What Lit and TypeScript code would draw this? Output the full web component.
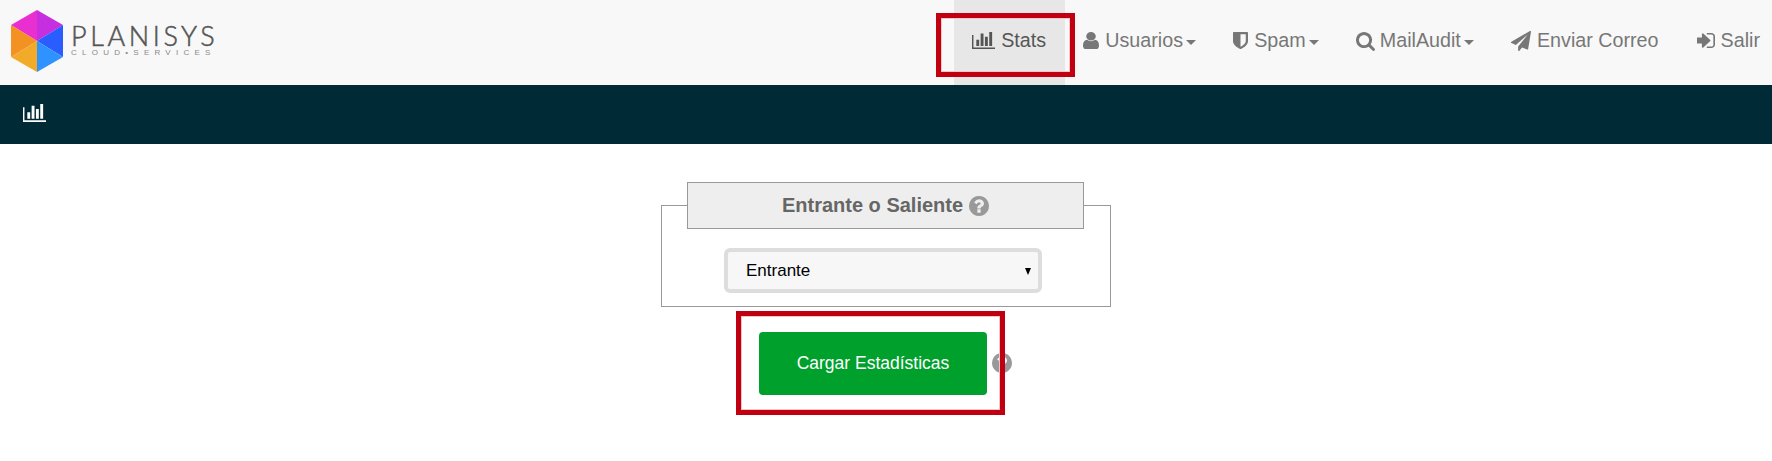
import { LitElement, html, css, svg } from "lit";
import { customElement } from "lit/decorators.js";

const P = {
  chart: "M640 896v512h-256v-512h256zm384-512v1024h-256v-1024h256zm1024 1152v128h-2048v-1152h128v1024h1920zm-640-896v768h-256v-768h256zm384-384v1152h-256v-1152h256z",
  user: "M1536 1399q0 109-62.5 187t-150.5 78h-854q-88 0-150.5-78t-62.5-187q0-85 8.5-160.5t31.5-152 58.5-131 94-89 134.5-34.5q131 128 313 128t313-128q76 0 134.5 34.5t94 89 58.5 131 31.5 152 8.5 160.5zm-256-887q0 159-112.5 271.5t-271.5 112.5-271.5-112.5-112.5-271.5 112.5-271.5 271.5-112.5 271.5 112.5 112.5 271.5z",
  shield: "M1344 960v-640h-448v1137q119-63 213-137 235-184 235-360zm192-768v768q0 86-33.5 170.5t-83 150-118 127.5-126.5 103-121 77.5-89.5 49.5-42.5 20q-12 6-26 6t-26-6q-16-7-42.5-20t-89.5-49.5-121-77.5-126.5-103-118-127.5-83-150-33.5-170.5v-768q0-26 19-45t45-19h1152q26 0 45 19t19 45z",
  search: "M1216 832q0-185-131.5-316.5t-316.5-131.5-316.5 131.5-131.5 316.5 131.5 316.5 316.5 131.5 316.5-131.5 131.5-316.5zm512 832q0 52-38 90t-90 38q-54 0-90-38l-343-342q-179 124-399 124-143 0-273.5-55.5t-225-150-150-225-55.5-273.5 55.5-273.5 150-225 225-150 273.5-55.5 273.5 55.5 225 150 150 225 55.5 273.5q0 220-124 399l343 343q37 37 37 90z",
  plane: "M1764 11q33 24 27 64l-256 1536q-5 29-32 45-14 8-31 8-11 0-24-5l-453-185-242 295q-18 23-49 23-13 0-22-4-19-7-30.5-23.5t-11.5-36.5v-349l864-1059-1069 925-395-162q-37-14-40-55-2-40 32-59l1664-960q15-9 32-9 20 0 36 11z",
  signin: "M1184 896q0 26-19 45l-544 544q-19 19-45 19t-45-19-19-45v-288h-448q-26 0-45-19t-19-45v-384q0-26 19-45t45-19h448v-288q0-26 19-45t45-19 45 19l544 544q19 19 19 45zm352-352v704q0 119-84.5 203.5t-203.5 84.5h-320q-13 0-22.5-9.5t-9.5-22.5q0-4-1-20t-.5-26.5 3-23.5 10-19.5 20.5-6.5h320q66 0 113-47t47-113v-704q0-66-47-113t-113-47h-312l-11.5-1-11.5-3-8-5.5-7-9-2-13.5q0-4-1-20t-.5-26.5 3-23.5 10-19.5 20.5-6.5h320q119 0 203.5 84.5t84.5 203.5z",
  help: "M1024 1376v-192q0-14-9-23t-23-9h-192q-14 0-23 9t-9 23v192q0 14 9 23t23 9h192q14 0 23-9t9-23zm256-672q0-88-55.5-163t-138.5-116-170-41q-243 0-371 213-15 24 8 42l132 100q7 6 19 6 16 0 25-12 53-68 86-92 34-24 86-24 48 0 85.5 26t37.5 59q0 38-20 61t-68 45q-63 28-115.5 86.5t-52.5 125.5v36q0 14 9 23t23 9h192q14 0 23-9t9-23q0-19 21.5-49.5t54.5-49.5q32-18 49-28.5t46-35 44.5-48 28-60.5 12.5-81zm384 192q0 209-103 385.5t-279.5 279.5-385.5 103-385.5-103-279.5-279.5-103-385.5 103-385.5 279.5-279.5 385.5-103 385.5 103 279.5 279.5 103 385.5z",
};

const icon = (d: string, cls: string, vb: string) =>
  html`<svg class=${cls} viewBox=${vb} preserveAspectRatio="none" aria-hidden="true">${svg`<path d=${d} fill="currentColor"></path>`}</svg>`;

const VB = {
  chart: "0 256 2048 1408",
  user: "256 128 1280 1536",
  shield: "256 128 1280 1536",
  search: "64 128 1664 1664",
  plane: "0 0 1792 1792",
  signin: "128 256 1408 1280",
  help: "128 128 1536 1536",
};

const facets: [string, string][] = [
  ["37,10 11,25 37,41", "#ea2fd0"],
  ["37,10 63,25 37,41", "#c52fe0"],
  ["63,25 63,57 37,41", "#2a5dff"],
  ["63,57 37,72 37,41", "#2e93ff"],
  ["37,72 11,57 37,41", "#f2ab28"],
  ["11,57 11,25 37,41", "#f39223"],
];

@customElement("app-root")
export class AppRoot extends LitElement {
  static styles = css`
    :host { display: block; font-family: "Liberation Sans", Arial, sans-serif; background: #fff; height: 461px; overflow: hidden; }
    .navbar { display: flex; justify-content: space-between; height: 85px; background: #f8f8f8; }
    .brand { display: flex; align-items: flex-start; }
    .hex { width: 74px; height: 85px; flex: none; }
    .wordmark { display: flex; flex-direction: column; margin-top: 23px; margin-left: -3px; }
    .name { font-family: Lato, sans-serif; font-weight: 300; font-size: 27px; line-height: 26px; letter-spacing: 3.6px; color: #555; -webkit-text-stroke: 0.5px #555; }
    .sub { font-family: "Liberation Sans", sans-serif; font-size: 8px; line-height: 8px; letter-spacing: 5.25px; color: #8a8a8a; white-space: nowrap; }
    .nav { display: flex; }
    .item { position: relative; display: flex; align-items: center; gap: 6px; padding: 0 18.6px 4px; font-size: 19.7px; color: #777; white-space: nowrap; }
    .item:last-child { padding-left: 19.6px; padding-right: 12px; }
    .item.active { background: #e7e7e7; color: #555; }
    .caret { width: 0; height: 0; border-left: 5px solid transparent; border-right: 5px solid transparent; border-top: 5px solid currentColor; margin-left: -3px; margin-top: 3px; }
    .i-chart { width: 23px; height: 17px; }
    .i-user { width: 16px; height: 17px; }
    .i-shield { width: 15px; height: 17px; }
    .i-search { width: 19px; height: 19px; margin-top: 2px; margin-right: -1px; }
    .i-plane { width: 20px; height: 20px; }
    .i-signin { width: 18px; height: 15px; }
    .mark { position: absolute; border: 5px solid #c00010; box-shadow: inset 0 0 0 1px #eec5c8; pointer-events: none; box-sizing: border-box; }
    .mark.stats { left: -18px; top: 13px; width: 139px; height: 64px; }
    .mark.load { left: -23px; top: -21px; width: 269px; height: 104px; }
    .sub-bar { height: 59px; background: #002b36; color: #fff; display: flex; align-items: center; padding-left: 23px; padding-bottom: 4px; box-sizing: border-box; }
    .sub-bar svg { width: 23px; height: 18px; }
    main { display: flex; flex-direction: column; align-items: center; padding-top: 61px; }
    .field { width: 450px; height: 102px; box-sizing: border-box; border: 1px solid #999; display: flex; flex-direction: column; align-items: center; }
    .legend { width: 397px; height: 47px; box-sizing: border-box; margin: -24px 0 0 -1px; border: 1px solid #999; background: #eee; color: #666; font-weight: bold; font-size: 20px; display: flex; align-items: center; justify-content: center; gap: 6px; }
    .help { width: 20px; height: 20px; color: #999; flex: none; }
    .select-wrap { position: relative; margin: 19px 6px 0 0; }
    select { display: block; width: 318px; height: 45px; box-sizing: border-box; appearance: none; border: 4px solid #ddd; border-radius: 6px; background-color: #f7f7f7; padding: 0 0 0 18px; font: 17px "Liberation Sans", Arial, sans-serif; color: #000; }
    .arrow { position: absolute; left: 301px; top: 20px; width: 0; height: 0; border-left: 3.5px solid transparent; border-right: 3.5px solid transparent; border-top: 7px solid #000; pointer-events: none; }
    .actions { position: relative; display: flex; align-items: center; gap: 5px; margin: 25px 0 0 759px; align-self: flex-start; }
    .load-btn { display: flex; align-items: center; justify-content: center; width: 228px; height: 63px; border-radius: 4px; background: #00a02d; color: #fff; font-size: 17.5px; }
    .load-help { width: 20px; height: 20px; color: #999; margin-top: -2px; }
  `;

  render() {
    return html`
      <header class="navbar">
        <div class="brand">
          <svg class="hex" viewBox="0 0 74 85" aria-hidden="true">
            ${facets.map(([p, c]) => svg`<polygon points=${p} fill=${c}></polygon>`)}
          </svg>
          <div class="wordmark">
            <span class="name">PLANISYS</span>
            <span class="sub">CLOUD•SERVICES</span>
          </div>
        </div>
        <nav class="nav">
          <div class="item active">${icon(P.chart, "i-chart", VB.chart)}<span>Stats</span><div class="mark stats"></div></div>
          <div class="item">${icon(P.user, "i-user", VB.user)}<span>Usuarios</span><span class="caret"></span></div>
          <div class="item">${icon(P.shield, "i-shield", VB.shield)}<span>Spam</span><span class="caret"></span></div>
          <div class="item">${icon(P.search, "i-search", VB.search)}<span>MailAudit</span><span class="caret"></span></div>
          <div class="item">${icon(P.plane, "i-plane", VB.plane)}<span>Enviar Correo</span></div>
          <div class="item">${icon(P.signin, "i-signin", VB.signin)}<span>Salir</span></div>
        </nav>
      </header>
      <div class="sub-bar">${icon(P.chart, "", VB.chart)}</div>
      <main>
        <section class="field">
          <div class="legend"><span>Entrante o Saliente</span>${icon(P.help, "help", VB.help)}</div>
          <div class="select-wrap">
            <select><option>Entrante</option><option>Saliente</option></select>
            <span class="arrow"></span>
          </div>
        </section>
        <div class="actions">
          <div class="load-btn">Cargar Estadísticas</div>
          ${icon(P.help, "load-help", VB.help)}
          <div class="mark load"></div>
        </div>
      </main>
    `;
  }
}
